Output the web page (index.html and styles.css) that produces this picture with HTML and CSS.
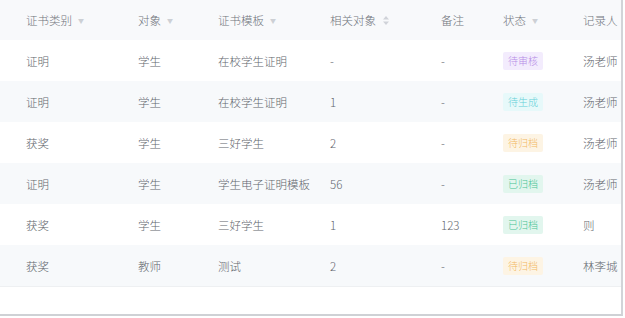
FILE: index.html
```html
<!DOCTYPE html>
<html lang="zh">
<head>
<meta charset="utf-8">
<link rel="stylesheet" href="styles.css">
</head>
<body>
<div class="frame">
  <div class="table">
    <div class="row head">
      <div class="cell">证书类别 <span class="caret">▼</span></div>
      <div class="cell">对象 <span class="caret">▼</span></div>
      <div class="cell">证书模板 <span class="caret">▼</span></div>
      <div class="cell">相关对象 <span class="sort"><svg width="6" height="9" viewBox="0 0 6 9"><path d="M3 0 L6 3.5 H0Z M3 9 L6 5.5 H0Z" fill="#d0d3d9"/></svg></span></div>
      <div class="cell">备注</div>
      <div class="cell">状态 <span class="caret">▼</span></div>
      <div class="cell">记录人</div>
    </div>
    <div class="row">
      <div class="cell">证明</div><div class="cell">学生</div><div class="cell">在校学生证明</div><div class="cell">-</div><div class="cell">-</div>
      <div class="cell"><span class="tag purple">待审核</span></div><div class="cell">汤老师</div>
    </div>
    <div class="row alt">
      <div class="cell">证明</div><div class="cell">学生</div><div class="cell">在校学生证明</div><div class="cell">1</div><div class="cell">-</div>
      <div class="cell"><span class="tag cyan">待生成</span></div><div class="cell">汤老师</div>
    </div>
    <div class="row">
      <div class="cell">获奖</div><div class="cell">学生</div><div class="cell">三好学生</div><div class="cell">2</div><div class="cell">-</div>
      <div class="cell"><span class="tag orange">待归档</span></div><div class="cell">汤老师</div>
    </div>
    <div class="row alt">
      <div class="cell">证明</div><div class="cell">学生</div><div class="cell">学生电子证明模板</div><div class="cell">56</div><div class="cell">-</div>
      <div class="cell"><span class="tag green">已归档</span></div><div class="cell">汤老师</div>
    </div>
    <div class="row">
      <div class="cell">获奖</div><div class="cell">学生</div><div class="cell">三好学生</div><div class="cell">1</div><div class="cell">123</div>
      <div class="cell"><span class="tag green">已归档</span></div><div class="cell">则</div>
    </div>
    <div class="row alt last">
      <div class="cell">获奖</div><div class="cell">教师</div><div class="cell">测试</div><div class="cell">2</div><div class="cell">-</div>
      <div class="cell"><span class="tag orange">待归档</span></div><div class="cell">林李城</div>
    </div>
  </div>
</div>
</body>
</html>
```
FILE: styles.css
```css
html, body {
  margin: 0;
  padding: 0;
  background: #ffffff;
}
body {
  font-family: "Noto Sans CJK SC", "Noto Sans", sans-serif;
  font-size: 11.5px;
  font-weight: 300;
  color: #62666d;
}
.frame {
  width: 623px;
  height: 316px;
  border-right: 2px solid #d2d4d8;
  border-bottom: 2px solid #cfd1d5;
  box-sizing: border-box;
  background: #fff;
}
.table {
  display: flex;
  flex-direction: column;
}
.row {
  display: grid;
  grid-template-columns: 112px 80px 112px 111px 62px 80px 1fr;
  padding-left: 26px;
  height: 41px;
  align-items: center;
  background: #ffffff;
}
.row.head {
  height: 40px;
  background: #f8f9fb;
  color: #70747b;
}
.row.alt {
  background: #f7f9fb;
}
.row.last {
  border-bottom: 1px solid #eef0f2;
}
.cell {
  white-space: nowrap;
  display: flex;
  align-items: center;
}
.caret {
  font-size: 6px;
  color: #cdd0d5;
  margin-left: 6px;
}
.sort {
  margin-left: 7px;
  display: inline-flex;
}
.tag {
  display: inline-block;
  width: 40px;
  height: 18px;
  line-height: 18px;
  text-align: center;
  font-size: 10px;
  border-radius: 2px;
}
.purple { background: #f3ecfd; color: #b58be6; }
.cyan { background: #e7f9fa; color: #63d0d8; }
.orange { background: #fdf4e4; color: #f2b862; }
.green { background: #e2f6ee; color: #47c393; }
```
